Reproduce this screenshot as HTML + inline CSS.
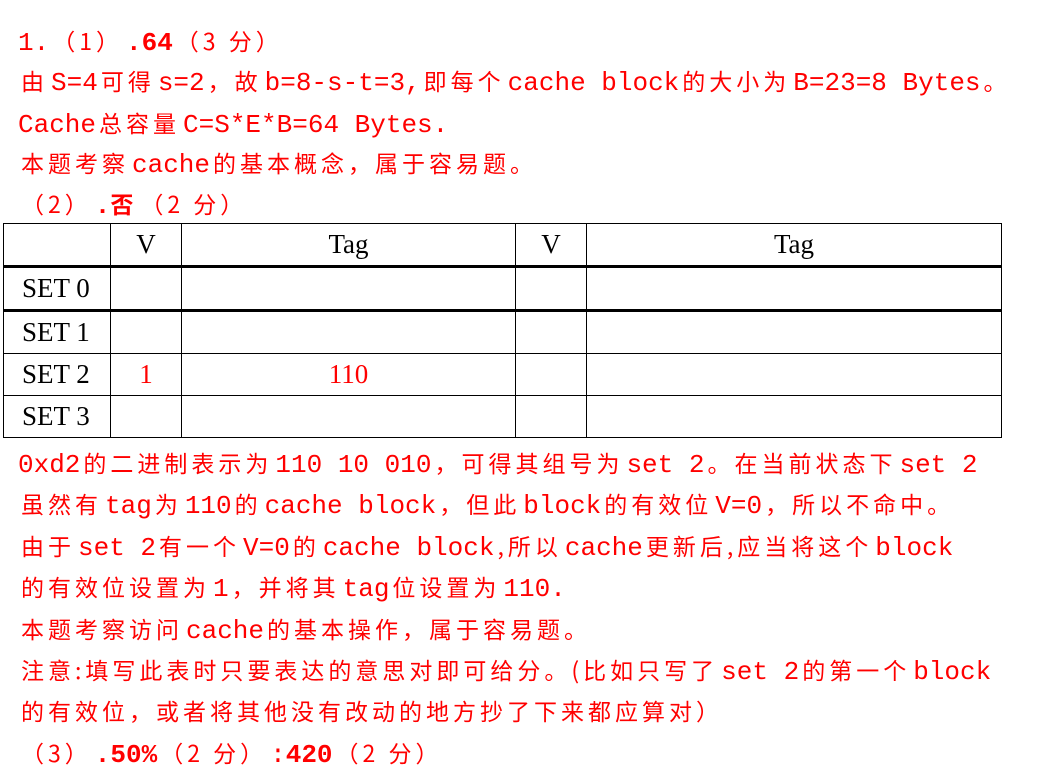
<!DOCTYPE html>
<html><head><meta charset="utf-8"><style>
body{margin:0;width:1039px;height:771px;background:#fff;position:relative;overflow:hidden}
.l{position:absolute;left:18px;height:30px;line-height:30px;white-space:nowrap;color:#f00;font-family:"Liberation Mono","Noto Sans CJK SC",monospace;font-size:26px;text-spacing-trim:space-all}
.c{font-family:"Noto Sans CJK SC",sans-serif;font-size:23px;letter-spacing:4px;padding:0 3px;text-spacing-trim:space-all}
b{font-weight:bold}
table{position:absolute;left:3px;top:223px;border-collapse:collapse;font-family:"Liberation Serif",serif;font-size:27px;color:#000}
td{border:1.5px solid #000;height:41px;padding:0;text-align:center}
td.s{text-align:left;padding-left:18px}
tr.h td{border-bottom:3px solid #000}
.r{color:#f00}
</style></head><body>
<div class="l" style="top:25px">1.<span class="c">（1）</span><b>.64</b><span class="c">（3 分）</span></div>
<div class="l" style="top:65px"><span class="c">由</span>S=4<span class="c">可得</span>s=2<span class="c">，故</span>b=8-s-t=3,<span class="c">即每个</span>cache block<span class="c">的大小为</span>B=23=8 Bytes<span class="c">。</span></div>
<div class="l" style="top:107px">Cache<span class="c">总容量</span>C=S*E*B=64 Bytes.</div>
<div class="l" style="top:147px"><span class="c">本题考察</span>cache<span class="c">的基本概念，属于容易题。</span></div>
<div class="l" style="top:188px"><span class="c">（2）</span><b>.<span class="c" style="padding:0">否</span></b><span class="c">（2 分）</span></div>
<table>
<tr class="h"><td style="width:106px"></td><td style="width:70px">V</td><td style="width:333px">Tag</td><td style="width:70px">V</td><td style="width:414px">Tag</td></tr>
<tr class="h"><td class="s">SET 0</td><td></td><td></td><td></td><td></td></tr>
<tr><td class="s">SET 1</td><td></td><td></td><td></td><td></td></tr>
<tr><td class="s">SET 2</td><td class="r">1</td><td class="r">110</td><td></td><td></td></tr>
<tr><td class="s">SET 3</td><td></td><td></td><td></td><td></td></tr>
</table>
<div class="l" style="top:447px">0xd2<span class="c">的二进制表示为</span>110 10 010<span class="c">，可得其组号为</span>set 2<span class="c">。在当前状态下</span>set 2</div>
<div class="l" style="top:488px"><span class="c">虽然有</span>tag<span class="c">为</span>110<span class="c">的</span>cache block<span class="c">，但此</span>block<span class="c">的有效位</span>V=0<span class="c">，所以不命中。</span></div>
<div class="l" style="top:530px"><span class="c">由于</span>set 2<span class="c">有一个</span>V=0<span class="c">的</span>cache block<span class="c">,所以</span>cache<span class="c">更新后,应当将这个</span>block</div>
<div class="l" style="top:571px"><span class="c">的有效位设置为</span>1<span class="c">，并将其</span>tag<span class="c">位设置为</span>110.</div>
<div class="l" style="top:613px"><span class="c">本题考察访问</span>cache<span class="c">的基本操作，属于容易题。</span></div>
<div class="l" style="top:654px"><span class="c">注意:填写此表时只要表达的意思对即可给分。(比如只写了</span>set 2<span class="c">的第一个</span>block</div>
<div class="l" style="top:695px"><span class="c">的有效位，或者将其他没有改动的地方抄了下来都应算对）</span></div>
<div class="l" style="top:737px"><span class="c">（3）</span><b>.50%</b><span class="c">（2 分）</span>:<b>420</b><span class="c">（2 分）</span></div>
</body></html>
